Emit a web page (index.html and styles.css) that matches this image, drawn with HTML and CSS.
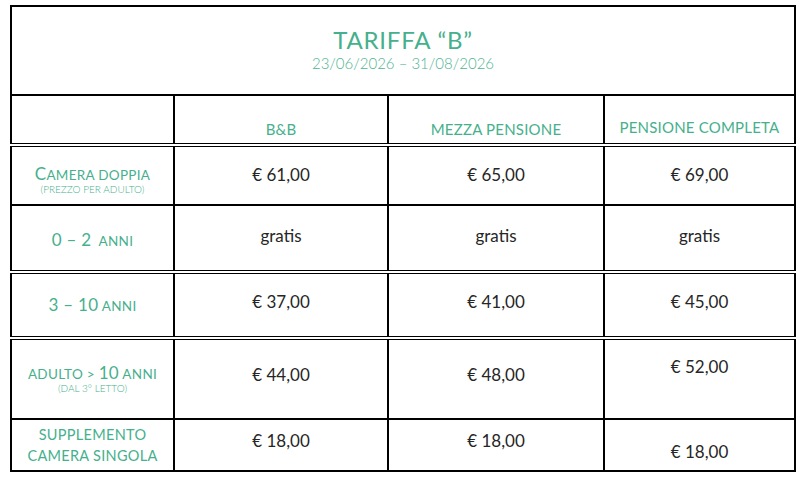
FILE: index.html
```html
<!DOCTYPE html>
<html lang="it">
<head>
<meta charset="utf-8">
<title>Tariffa B</title>
<link rel="stylesheet" href="styles.css">
</head>
<body>
<table class="rates">
  <colgroup>
    <col class="c-label">
    <col class="c-bb">
    <col class="c-mezza">
    <col class="c-comp">
  </colgroup>
  <tr class="r-title">
    <td colspan="4" class="title-cell">
      <div class="title">TARIFFA “B”</div>
      <div class="dates">23/06/2026 – 31/08/2026</div>
    </td>
  </tr>
  <tr class="r-head">
    <td></td>
    <td class="head">B&amp;B</td>
    <td class="head">MEZZA PENSIONE</td>
    <td class="head head-up">PENSIONE COMPLETA</td>
  </tr>
  <tr class="r-doppia dbl-top">
    <td class="label"><span class="cap-big">C</span>AMERA DOPPIA<div class="note">(PREZZO PER ADULTO)</div></td>
    <td class="price">€ 61,00</td>
    <td class="price">€ 65,00</td>
    <td class="price">€ 69,00</td>
  </tr>
  <tr class="r-02">
    <td class="label"><span class="num">0 – 2</span>&nbsp; ANNI</td>
    <td class="price">gratis</td>
    <td class="price">gratis</td>
    <td class="price">gratis</td>
  </tr>
  <tr class="r-310 dbl-top">
    <td class="label"><span class="num">3 – 10</span> ANNI</td>
    <td class="price">€ 37,00</td>
    <td class="price">€ 41,00</td>
    <td class="price">€ 45,00</td>
  </tr>
  <tr class="r-adulto dbl-top">
    <td class="label">ADULTO &gt; <span class="num">10</span> ANNI<div class="note">(DAL 3° LETTO)</div></td>
    <td class="price">€ 44,00</td>
    <td class="price">€ 48,00</td>
    <td class="price price-up">€ 52,00</td>
  </tr>
  <tr class="r-supp">
    <td class="label label-supp">SUPPLEMENTO<br>CAMERA SINGOLA</td>
    <td class="price">€ 18,00</td>
    <td class="price">€ 18,00</td>
    <td class="price price-down">€ 18,00</td>
  </tr>
</table>
</body>
</html>
```

FILE: styles.css
```css
html, body {
  margin: 0;
  padding: 0;
  background: #ffffff;
}

body {
  font-family: Lato, "Noto Sans", sans-serif;
  color: #1f1f1f;
}

.rates {
  margin: 5px 0 0 10px;
  border-collapse: collapse;
  table-layout: fixed;
  width: 784px;
}

.c-label { width: 163px; }
.c-bb { width: 214px; }
.c-mezza { width: 216px; }
.c-comp { width: 191px; }

.rates td {
  border: 2px solid #000;
  padding: 0;
  text-align: center;
  vertical-align: middle;
}

.dbl-top td {
  border-top: 4px double #000;
}

.r-title { height: 89px; }
.r-head { height: 50px; }
.r-doppia { height: 60px; }
.r-02 { height: 67px; }
.r-310 { height: 66px; }
.r-adulto { height: 81px; }
.r-supp { height: 52px; }

.title-cell {
  color: #46b08d;
  padding-bottom: 4px !important;
}

.title {
  font-size: 24px;
  letter-spacing: 0.8px;
  line-height: 28px;
}

.dates {
  font-size: 15px;
  line-height: 18px;
  font-weight: 300;
  color: #4fb490;
}

.head {
  color: #46b08d;
  font-size: 15px;
  letter-spacing: 0.2px;
  padding-top: 18px !important;
}

.head-up {
  padding-top: 14px !important;
}

.label {
  color: #46b08d;
  font-size: 13.5px;
  letter-spacing: 0.3px;
  line-height: 16px;
}

.cap-big {
  font-size: 17px;
}

.num {
  font-size: 17px;
}

.note {
  font-size: 10px;
  line-height: 13px;
  letter-spacing: 0;
  font-weight: 300;
}

.r-doppia .label { padding-top: 10px !important; }
.r-02 .label { padding-top: 4px !important; }
.r-310 .label { padding-top: 0; }
.r-adulto .label { padding-top: 2px !important; }

.label-supp {
  font-size: 14.5px;
  line-height: 21px;
}

.price {
  font-size: 17px;
  font-weight: 400;
  color: #262626;
}

.r-doppia .price { padding-bottom: 2px !important; }
.r-02 .price { padding-bottom: 6px !important; }
.r-310 .price { padding-bottom: 8px !important; }
.r-adulto .price { padding-bottom: 10px !important; }
.r-adulto .price-up { padding-bottom: 26px !important; }
.r-supp .price { padding-bottom: 10px !important; }
.r-supp .price-down { padding-bottom: 0 !important; padding-top: 12px !important; }
```
